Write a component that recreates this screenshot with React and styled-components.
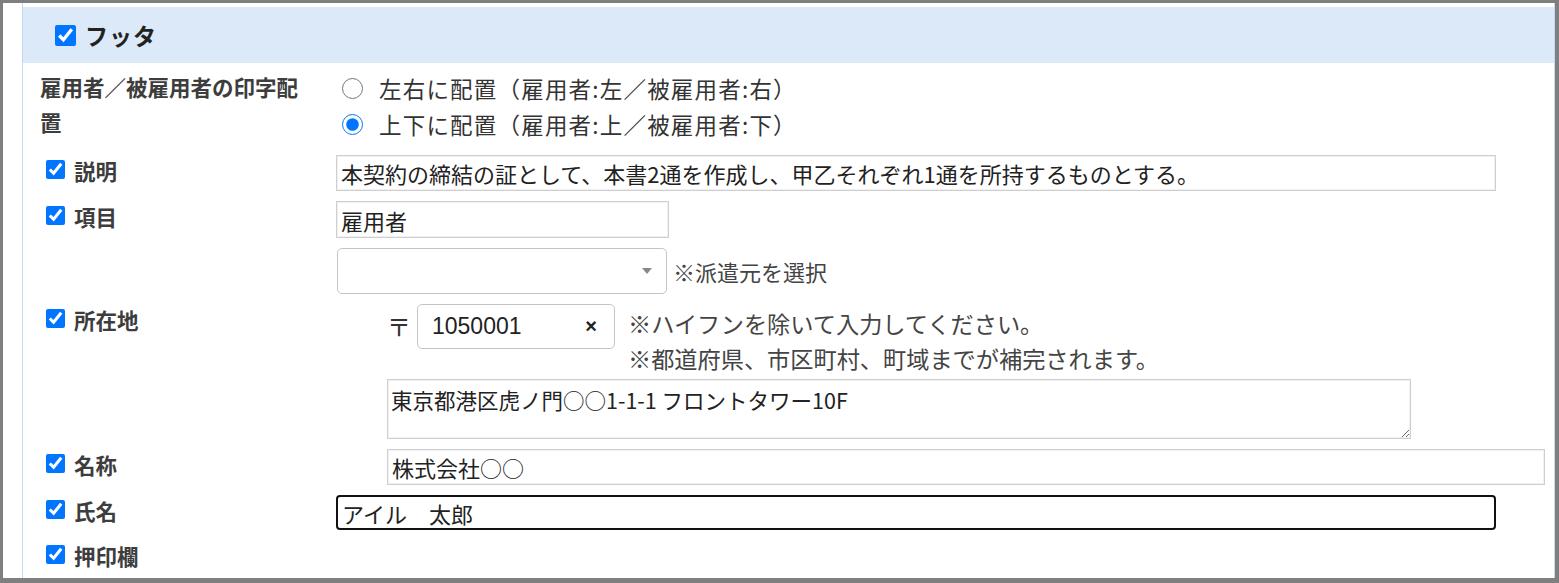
import React from 'react';
import styled, { createGlobalStyle } from 'styled-components';

const GlobalStyle = createGlobalStyle`
  html, body {
    margin: 0;
    padding: 0;
  }
  body {
    background: #7f7f7f;
    font-family: "Noto Sans CJK JP", "Noto Sans", sans-serif;
    color: #333;
  }
`;

function App() {
  return (
    <>
      <GlobalStyle />
      <Frame>
        <Section>
          <Header>
            <HeaderCheck type="checkbox" defaultChecked />
            <Title>フッタ</Title>
          </Header>
          <Body>
            <Row $after={3}>
              <Label>雇用者／被雇用者の印字配置</Label>
              <RadioList>
                <RadioOption>
                  <Radio type="radio" name="layout" />
                  <span>左右に配置（雇用者:左／被雇用者:右）</span>
                </RadioOption>
                <RadioOption>
                  <Radio type="radio" name="layout" defaultChecked />
                  <span>上下に配置（雇用者:上／被雇用者:下）</span>
                </RadioOption>
              </RadioList>
            </Row>

            <Row>
              <Label $check>
                <Check type="checkbox" defaultChecked />
                <span>説明</span>
              </Label>
              <Value>
                <TextInput
                  $width={1160}
                  defaultValue="本契約の締結の証として、本書2通を作成し、甲乙それぞれ1通を所持するものとする。"
                />
              </Value>
            </Row>

            <Row>
              <Label $check>
                <Check type="checkbox" defaultChecked />
                <span>項目</span>
              </Label>
              <Value>
                <TextInput $width={333} $height={37} defaultValue="雇用者" />
              </Value>
            </Row>

            <Row>
              <div />
              <Value $center>
                <SelectBox>
                  <Arrow />
                </SelectBox>
                <Note>※派遣元を選択</Note>
              </Value>
            </Row>

            <Row>
              <Label $check>
                <Check type="checkbox" defaultChecked />
                <span>所在地</span>
              </Label>
              <Value $indent $column>
                <PostalLine>
                  <PostalMark>〒</PostalMark>
                  <PostalBox>
                    <PostalInput defaultValue="1050001" />
                    <Clear>×</Clear>
                  </PostalBox>
                  <Notes>
                    <div>※ハイフンを除いて入力してください。</div>
                    <div>※都道府県、市区町村、町域までが補完されます。</div>
                  </Notes>
                </PostalLine>
                <Address defaultValue="東京都港区虎ノ門○○1-1-1 フロントタワー10F" />
              </Value>
            </Row>

            <Row>
              <Label $check>
                <Check type="checkbox" defaultChecked />
                <span>名称</span>
              </Label>
              <Value $indent>
                <TextInput $width={1158} defaultValue="株式会社○○" />
              </Value>
            </Row>

            <Row>
              <Label $check>
                <Check type="checkbox" defaultChecked />
                <span>氏名</span>
              </Label>
              <Value>
                <TextInput $width={1160} $height={35} $focused defaultValue="アイル　太郎" />
              </Value>
            </Row>

            <Row>
              <Label $check>
                <Check type="checkbox" defaultChecked />
                <span>押印欄</span>
              </Label>
              <div />
            </Row>
          </Body>
        </Section>
      </Frame>
    </>
  );
}

export default App;

const Frame = styled.div`
  margin: 3px 4px 0 3px;
  height: 575px;
  background: #fff;
  overflow: hidden;
`;

const Section = styled.div`
  margin-left: 19px;
  height: 100%;
  box-sizing: border-box;
  padding-top: 4px;
  border-left: 1px solid #c4daf4;
  border-right: 1px solid #c4daf4;
`;

const Header = styled.div`
  height: 56px;
  background: #dbe9f8;
  display: flex;
  align-items: center;
  gap: 9px;
  padding-left: 32px;
`;

const HeaderCheck = styled.input`
  width: 21px;
  height: 21px;
  margin: 0;
  accent-color: #0075ff;
`;

const Title = styled.span`
  font-size: 23px;
  font-weight: 700;
  color: #222;
  letter-spacing: 1px;
`;

const Body = styled.div`
  display: flex;
  flex-direction: column;
  gap: 10px;
  padding: 6px 0 0 17px;
`;

const Row = styled.div`
  display: grid;
  grid-template-columns: 296px 1fr;
  margin-bottom: ${(p) => p.$after || 0}px;
`;

const Label = styled.label`
  display: flex;
  align-items: flex-start;
  gap: 9px;
  padding: 0 36px 0 ${(p) => (p.$check ? 6 : 0)}px;
  font-size: 21.5px;
  line-height: ${(p) => (p.$check ? 31 : 35)}px;
  font-weight: 700;
  color: #3d3d3d;
`;

const Check = styled.input`
  width: 19px;
  height: 19px;
  margin: 5px 0 0;
  flex-shrink: 0;
  accent-color: #0075ff;
`;

const RadioList = styled.div`
  display: flex;
  flex-direction: column;
  padding-top: 1px;
`;

const RadioOption = styled.label`
  display: flex;
  align-items: center;
  gap: 16px;
  font-size: 22.5px;
  letter-spacing: 1.2px;
  line-height: 36px;
  color: #333;
`;

const Radio = styled.input`
  width: 21px;
  height: 21px;
  margin: 0 0 0 6px;
  accent-color: #0075ff;
`;

const Value = styled.div`
  display: flex;
  flex-direction: ${(p) => (p.$column ? 'column' : 'row')};
  align-items: ${(p) => (p.$center ? 'center' : 'flex-start')};
  padding-left: ${(p) => (p.$indent ? 51 : 0)}px;
`;

const TextInput = styled.input`
  box-sizing: border-box;
  width: ${(p) => p.$width}px;
  height: ${(p) => p.$height || 36}px;
  padding: 0 4px;
  font-family: inherit;
  font-size: 22px;
  color: #222;
  background: #fff;
  border: ${(p) => (p.$focused ? '2px solid #111' : '1px solid #cfcfcf')};
  border-radius: ${(p) => (p.$focused ? 4 : 0)}px;
  box-shadow: ${(p) => (p.$focused ? 'none' : 'inset 0 0 0 1px #f0f0f0')};
  outline: none;
`;

const SelectBox = styled.div`
  box-sizing: border-box;
  width: 330px;
  height: 46px;
  margin-left: 1px;
  border: 1px solid #c4c4c4;
  border-radius: 5px;
  display: flex;
  align-items: center;
  justify-content: flex-end;
  padding-right: 14px;
`;

const Arrow = styled.span`
  width: 0;
  height: 0;
  border-left: 5px solid transparent;
  border-right: 5px solid transparent;
  border-top: 6px solid #888;
`;

const Note = styled.span`
  margin-left: 6px;
  font-size: 22px;
  color: #444;
`;

const PostalLine = styled.div`
  display: flex;
  align-items: flex-start;
`;

const PostalMark = styled.span`
  width: 22px;
  margin-right: 8px;
  font-size: 24px;
  line-height: 43px;
  color: #333;
`;

const PostalBox = styled.div`
  box-sizing: border-box;
  width: 198px;
  height: 45px;
  border: 1px solid #c4c4c4;
  border-radius: 5px;
  display: flex;
  align-items: center;
  padding: 0 14px;
`;

const PostalInput = styled.input`
  flex: 1;
  min-width: 0;
  border: none;
  outline: none;
  padding: 0;
  font-family: "Liberation Sans", Arial, sans-serif;
  font-size: 23px;
  color: #222;
`;

const Clear = styled.span`
  font-family: "Liberation Sans", Arial, sans-serif;
  font-size: 20px;
  font-weight: 700;
  color: #222;
  margin-right: 3px;
`;

const Notes = styled.div`
  margin: 2px 0 3px 13px;
  font-size: 23.2px;
  line-height: 35px;
  color: #444;
`;

const Address = styled.textarea`
  box-sizing: border-box;
  width: 1024px;
  height: 60px;
  margin: 0;
  padding: 2px 3px;
  font-family: inherit;
  font-size: 21.5px;
  line-height: 35px;
  color: #222;
  border: 1px solid #cfcfcf;
  box-shadow: inset 0 0 0 1px #f0f0f0;
  outline: none;
  resize: both;
`;
